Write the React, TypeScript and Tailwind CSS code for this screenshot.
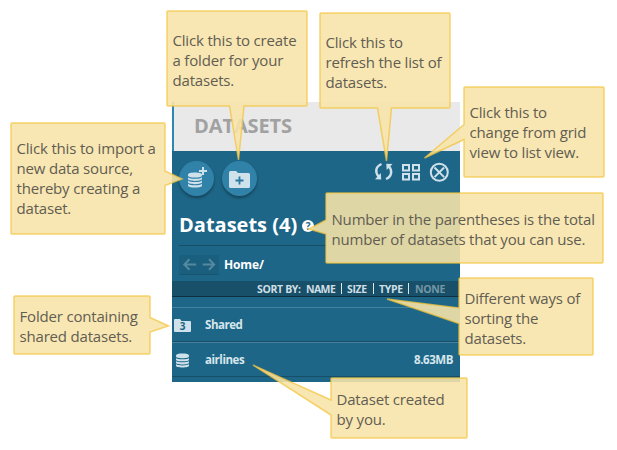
import React from "react";

type CalloutProps = {
  box: string;
  lines: string[];
};

const outlines = [
  "M168 11H306Q307 11 307 12V105Q307 106 306 106H244L238.5 160L229.5 106H168Q167 106 167 105V12Q167 11 168 11Z",
  "M321 13H449Q450 13 450 14V107Q450 108 449 108H391.5L386.5 161L377.5 108H321Q320 108 320 107V14Q320 13 321 13Z",
  "M12 123H164Q165 123 165 124V171L182 179L165 185.5V233Q165 234 164 234H12Q11 234 11 233V124Q11 123 12 123Z",
  "M465 87H603Q604 87 604 88V176Q604 177 603 177H465Q464 177 464 176V139.500L424.500 158L464 124.500V88Q464 87 465 87Z",
  "M327 193H602Q603 193 603 194V262Q603 263 602 263H327Q326 263 326 262V234L309 229L326 220V194Q326 193 327 193Z",
  "M15 296H149Q150 296 150 297V317.500L168.500 326L150 332V353Q150 354 149 354H15Q14 354 14 353V297Q14 296 15 296Z",
  "M460 278H592Q593 278 593 279V354Q593 355 592 355H460Q459 355 459 354V323.500L387 299L459 308V279Q459 278 460 278Z",
  "M332 378H466Q467 378 467 379V437Q467 438 466 438H332Q331 438 331 437V415L253 365L331 400V379Q331 378 332 378Z",
];

function Callout({ box, lines }: CalloutProps) {
  return (
    <div className={`absolute flex flex-col whitespace-nowrap text-[15px] leading-5 tracking-[-0.18px] text-[#625d53] ${box}`}>
      {lines.map((line) => (
        <span key={line}>{line}</span>
      ))}
    </div>
  );
}

function Discs({ className }: { className: string }) {
  return (
    <svg viewBox="0 0 14 15" className={className} fill="#cfe1ea">
      <path d="M0 2.300C0 .7 3 0 7 0s7 .7 7 2.300v.7c0 1.500-3 2.100-7 2.100S0 4.500 0 3z" />
      <path d="M0 4.700c1 1.200 3.500 1.500 7 1.500s6-.3 7-1.500v1.600c0 1.500-3 2.100-7 2.100S0 7.800 0 6.300z" />
      <path d="M0 8c1 1.200 3.500 1.500 7 1.500S13 9.200 14 8v1.600c0 1.500-3 2.100-7 2.100S0 11.100 0 9.600z" />
      <path d="M0 11.300c1 1.200 3.500 1.500 7 1.500s6-.3 7-1.500v1.600C14 14.400 11 15 7 15s-7-.6-7-2.100z" />
    </svg>
  );
}

function Panel() {
  return (
    <div className="flex h-[280px] w-[288px] flex-col bg-[#1e6687] font-bold">
      <header className="flex h-[49px] shrink-0 items-center border-l-2 border-[#2e87ae] bg-[#e9e9e9] pb-[2px] pl-[20px] text-[20px] leading-none text-[#a1a1a1]">
        <span className="tracking-[-0.1px]">DATASETS</span>
      </header>

      <div className="flex h-[54px] shrink-0 pl-[7px] pt-[10px]">
        <div className="relative size-[35px] rounded-full bg-[#3182a9] shadow-[0_2px_3px_rgba(0,0,0,0.35)]">
          <Discs className="absolute left-[9px] top-[11px] h-[16px] w-[14px]" />
          <svg viewBox="0 0 8 8" className="absolute left-[20px] top-[6px] size-[8px]">
            <path d="M4 0V8M0 4H8" stroke="#cfe1ea" strokeWidth="2" />
          </svg>
        </div>
        <div className="ml-[8px] flex size-[35px] items-center justify-center rounded-full bg-[#3182a9] shadow-[0_2px_3px_rgba(0,0,0,0.35)]">
          <svg viewBox="0 0 21 17" className="mt-[2px] h-[17px] w-[21px]">
            <path d="M1.500 0H7L9 2H19.500Q21 2 21 3.500V15.500Q21 17 19.500 17H1.500Q0 17 0 15.500V1.500Q0 0 1.500 0Z" fill="#cfe1ea" />
            <path d="M10.500 5.500V13.500M6.500 9.500H14.500" stroke="#2a799f" strokeWidth="1.800" />
          </svg>
        </div>
        <svg viewBox="0 0 76 20" className="ml-[117px] mt-px h-[20px] w-[76px]" fill="none" stroke="#cfe1ea">
          <path d="M7.500 2C1.500 4.500 .8 10 4.500 14.500" strokeWidth="2.400" />
          <path d="M1 17.200L7.200 17.500L6.800 11Z" fill="#cfe1ea" stroke="none" />
          <path d="M12 17C18 14.500 18.500 8.500 15 4.500" strokeWidth="2.400" />
          <path d="M18.500 2L12.300 1.700L12.700 8Z" fill="#cfe1ea" stroke="none" />
          <path d="M29 3H35V8.500H29ZM39 3H45V8.500H39ZM29 12H35V17.500H29ZM39 12H45V17.500H39Z" strokeWidth="2" />
          <circle cx="65.300" cy="10.300" r="8.500" strokeWidth="2" />
          <path d="M60.500 5.500L70.100 15.100M70.100 5.500L60.500 15.100" strokeWidth="2" />
        </svg>
      </div>

      <div className="ml-[7px] flex h-[41px] shrink-0 items-center border-b border-[#174f69] text-white">
        <span className="-mt-px text-[20px] leading-none">Datasets (4)</span>
        <span className="ml-[5px] mt-[2px] flex size-[12px] items-center justify-center rounded-full bg-white text-[10px] leading-none text-[#1e6687]">?</span>
      </div>

      <div className="flex h-[35px] shrink-0 items-center pl-[7px] text-white">
        <svg viewBox="0 0 40 20" className="mt-[2px] h-[20px] w-[40px] border-b border-[#19546f] bg-[#1b5f7e]" fill="none" stroke="#56899f" strokeWidth="2">
          <path d="M4.500 10H17M10 4.500L4.500 10L10 15.500M24 10H36M30.500 4.500L36 10L30.500 15.500" />
        </svg>
        <span className="ml-[5px] mt-[2px] text-[12px] leading-none tracking-[-0.15px]">Home/</span>
      </div>

      <div className="flex h-[16px] shrink-0 items-center border-b border-[#102e3e] bg-[#184f69] pl-[85px] text-[10.500px] leading-none tracking-[-0.35px] text-[#cfdfe6]">
        <span className="mt-px w-[49px]">SORT BY:</span>
        <span className="mt-px w-[35px] tracking-[-0.6px]">NAME</span>
        <span className="mr-[5px] h-[11px] w-px bg-[#dce7ec]" />
        <span className="mt-px w-[26px]">SIZE</span>
        <span className="mr-[5px] h-[11px] w-px bg-[#dce7ec]" />
        <span className="mt-px w-[29px]">TYPE</span>
        <span className="mr-[6px] h-[11px] w-px bg-[#dce7ec]" />
        <span className="mt-px text-[#7497a6]">NONE</span>
      </div>

      <div className="h-[10px] shrink-0" />
      <div className="flex h-[35px] shrink-0 items-center border-b border-t border-b-[#174f69] border-t-[#4582a0] pl-[2px] text-[11.500px] tracking-[-0.45px] text-[#d6e6ed]">
        <span className="relative mt-px flex h-[13px] w-[17px] items-center justify-center">
          <svg viewBox="0 0 17 13" className="absolute inset-0 h-[13px] w-[17px]">
            <path d="M1 0H6L7.500 2H16Q17 2 17 3V12Q17 13 16 13H1Q0 13 0 12V1Q0 0 1 0Z" fill="#cfe1ea" />
          </svg>
          <span className="relative mt-px text-[10px] leading-none text-[#1e6687]">3</span>
        </span>
        <span className="ml-[14px] mt-px">Shared</span>
      </div>
      <div className="flex h-[35px] shrink-0 items-center border-b border-t border-b-[#174f69] border-t-[#4582a0] pl-[4px] pr-[7px] pt-px text-[11.500px] tracking-[-0.45px] text-[#d6e6ed]">
        <Discs className="h-[15px] w-[13px]" />
        <span className="ml-[16px]">airlines</span>
        <span className="ml-auto">8.63MB</span>
      </div>
    </div>
  );
}

export default function App() {
  return (
    <main className="relative h-[450px] w-[617px] overflow-hidden bg-white pl-[172px] pt-[102px] font-['Open_Sans','Noto_Sans',sans-serif]">
      <Panel />
      <svg viewBox="0 0 617 450" className="absolute inset-0 h-[450px] w-[617px]">
        {outlines.map((d) => (
          <path key={d} d={d} fill="#f7e4a9" fillOpacity="0.89" stroke="#f2c43c" strokeOpacity="0.72" strokeWidth="1.500" />
        ))}
      </svg>
      <Callout box="left-[172.500px] top-[30px]" lines={["Click this to create", "a folder for your", "datasets."]} />
      <Callout box="left-[325.500px] top-[32px]" lines={["Click this to", "refresh the list of", "datasets."]} />
      <Callout box="left-[16.500px] top-[138px]" lines={["Click this to import a", "new data source,", "thereby creating a", "dataset."]} />
      <Callout box="left-[469.500px] top-[102px]" lines={["Click this to", "change from grid", "view to list view."]} />
      <Callout box="left-[331.500px] top-[209px]" lines={["Number in the parentheses is the total", "number of datasets that you can use."]} />
      <Callout box="left-[19.500px] top-[306px]" lines={["Folder containing", "shared datasets."]} />
      <Callout box="left-[464.500px] top-[288px]" lines={["Different ways of", "sorting the", "datasets."]} />
      <Callout box="left-[336.500px] top-[389px]" lines={["Dataset created", "by you."]} />
    </main>
  );
}
